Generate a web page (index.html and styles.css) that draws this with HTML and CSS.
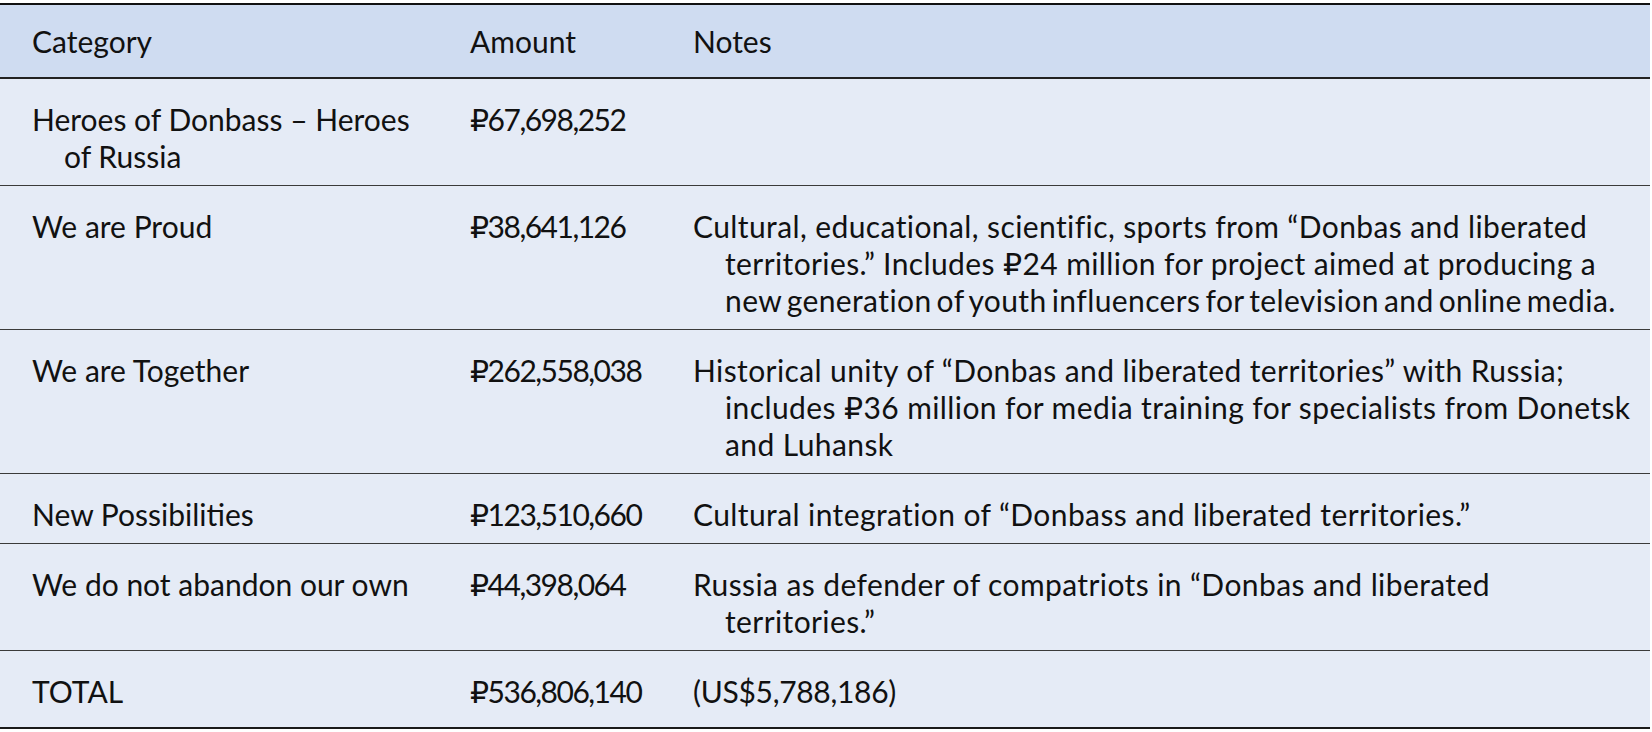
FILE: index.html
```html
<!DOCTYPE html>
<html lang="en">
<head>
<meta charset="utf-8">
<title>Table</title>
<link rel="stylesheet" href="styles.css">
</head>
<body>
<table class="grid">
  <colgroup>
    <col class="c-cat">
    <col class="c-amt">
    <col class="c-notes">
  </colgroup>
  <thead>
    <tr>
      <th>Category</th>
      <th>Amount</th>
      <th>Notes</th>
    </tr>
  </thead>
  <tbody>
    <tr>
      <td><div class="hang">Heroes of Donbass – Heroes<br>of Russia</div></td>
      <td class="amt">₽67,698,252</td>
      <td class="notes"></td>
    </tr>
    <tr>
      <td>We are Proud</td>
      <td class="amt">₽38,641,126</td>
      <td class="notes"><div class="hang">Cultural, educational, scientific, sports from “Donbas and liberated<br>territories.” Includes ₽24 million for project aimed at producing a<br><span class="tight">new generation of youth influencers for television and online media.</span></div></td>
    </tr>
    <tr>
      <td>We are Together</td>
      <td class="amt">₽262,558,038</td>
      <td class="notes"><div class="hang">Historical unity of “Donbas and liberated territories” with Russia;<br>includes ₽36 million for media training for specialists from Donetsk<br>and Luhansk</div></td>
    </tr>
    <tr>
      <td>New Possibilities</td>
      <td class="amt">₽123,510,660</td>
      <td class="notes"><div class="hang">Cultural integration of “Donbass and liberated territories.”</div></td>
    </tr>
    <tr>
      <td>We do not abandon our own</td>
      <td class="amt">₽44,398,064</td>
      <td class="notes"><div class="hang">Russia as defender of compatriots in “Donbas and liberated<br>territories.”</div></td>
    </tr>
    <tr class="total">
      <td>TOTAL</td>
      <td class="amt">₽536,806,140</td>
      <td class="usd">(US$5,788,186)</td>
    </tr>
  </tbody>
</table>
</body>
</html>
```
FILE: styles.css
```css
html, body {
  margin: 0;
  padding: 0;
  background: #ffffff;
}
body {
  padding-top: 3px;
}
.grid {
  width: 1650px;
  border-collapse: collapse;
  table-layout: fixed;
  font-family: Lato, "DejaVu Sans", sans-serif;
  font-size: 30px;
  line-height: 37px;
  color: #111111;
  border-top: 2px solid #111111;
  border-bottom: 2px solid #1a1a1a;
}
.c-cat { width: 438px; }
.c-amt { width: 223px; }
.c-notes { width: auto; }
.grid th,
.grid td {
  text-align: left;
  vertical-align: top;
  font-weight: normal;
  padding: 22px 4px 10px 32px;
  white-space: nowrap;
}
.grid thead tr {
  background: #cfdcf1;
}
.grid thead th {
  padding-top: 18px;
  padding-bottom: 17px;
  border-bottom: 2px solid #222222;
}
.grid tbody tr {
  background: #e5ebf6;
  border-bottom: 1px solid #3a3a3a;
}
.grid tbody tr.total td {
  padding-top: 22px;
  padding-bottom: 17px;
}
.amt {
  letter-spacing: -1.5px;
}
.notes {
  letter-spacing: 0.4px;
}
.usd {
  letter-spacing: -0.3px;
}
.hang {
  padding-left: 32px;
  text-indent: -32px;
}
.tight {
  word-spacing: -3px;
}
```
